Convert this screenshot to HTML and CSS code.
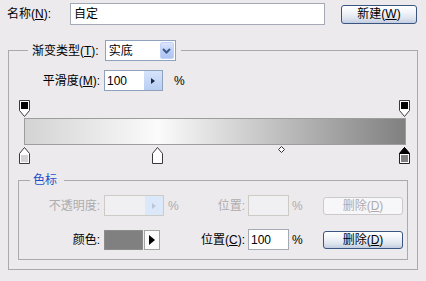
FILE: index.html
```html
<!DOCTYPE html>
<html lang="zh">
<head>
<meta charset="utf-8">
<title>渐变编辑器</title>
<link rel="stylesheet" href="styles.css">
</head>
<body>
<div class="name-row">
  <span class="name-label">名称(<u>N</u>):</span>
  <div class="textbox name-input">自定</div>
  <button class="btn new-btn">新建(<u>W</u>)</button>
</div>

<fieldset class="group outer">
  <legend class="outer-legend">
    <span class="legend-inner">
      <span class="type-label">渐变类型(<u>T</u>):</span>
      <span class="select">
        <span class="select-text">实底</span>
        <span class="select-btn">
          <svg width="9" height="6" viewBox="0 0 9 6"><path d="M1 1 L4.5 4.5 L8 1" fill="none" stroke="#3d5a8c" stroke-width="2"/></svg>
        </span>
      </span>
    </span>
  </legend>

  <div class="row smooth-row">
    <span class="col-label wide">平滑度(<u>M</u>):</span>
    <span class="spinbox">
      <span class="spin-text">100</span>
      <span class="spin-btn"><svg width="4" height="6" viewBox="0 0 4 6"><path d="M0 0 L4 3 L0 6 Z" fill="#1b2a44"/></svg></span>
    </span>
    <span class="pct smooth-pct">%</span>
  </div>

  <div class="ramp">
    <svg class="stop stop-top" style="left:-5px" width="11" height="17" viewBox="0 0 11 17"><path d="M0.5 0.5 H10.5 V10.5 L5.5 16.5 L0.5 10.5 Z" fill="#fff" stroke="#3a3a3a"/><rect x="2" y="2" width="7" height="7" fill="#000"/></svg>
    <svg class="stop stop-top" style="left:375px" width="11" height="17" viewBox="0 0 11 17"><path d="M0.5 0.5 H10.5 V10.5 L5.5 16.5 L0.5 10.5 Z" fill="#fff" stroke="#3a3a3a"/><rect x="2" y="2" width="7" height="7" fill="#000"/></svg>

    <div class="bar"></div>

    <svg class="stop stop-bottom" style="left:-5px" width="11" height="17" viewBox="0 0 11 17"><path d="M5.5 0.5 L10.5 6.5 V16.5 H0.5 V6.5 Z" fill="#fff" stroke="#3a3a3a"/><rect x="2" y="8" width="7" height="7" fill="#d4d4d4"/></svg>
    <svg class="stop stop-bottom" style="left:128px" width="11" height="17" viewBox="0 0 11 17"><path d="M5.5 0.5 L10.5 6.5 V16.5 H0.5 V6.5 Z" fill="#fff" stroke="#3a3a3a"/><rect x="2" y="8" width="7" height="7" fill="#ffffff"/></svg>
    <svg class="stop stop-bottom" style="left:375px" width="11" height="17" viewBox="0 0 11 17"><path d="M5.5 0.5 L10.5 6.5 V16.5 H0.5 V6.5 Z" fill="#fff" stroke="#222"/><path d="M5.5 0.5 L10.5 6.5 H0.5 Z" fill="#000" stroke="#000"/><rect x="2" y="8" width="7" height="7" fill="#808080"/></svg>
    <svg class="midpoint" style="left:254px" width="7" height="7" viewBox="0 0 7 7"><path d="M3.5 0.5 L6.5 3.5 L3.5 6.5 L0.5 3.5 Z" fill="#fff" stroke="#333"/></svg>
  </div>

  <fieldset class="group inner">
    <legend class="inner-legend">色标</legend>

    <div class="row stop-row disabled">
      <span class="col-label">不透明度:</span>
      <span class="control">
        <span class="spinbox off">
          <span class="spin-text"></span>
          <span class="spin-btn"><svg width="4" height="6" viewBox="0 0 4 6"><path d="M0 0 L4 3 L0 6 Z" fill="#b7c6dc"/></svg></span>
        </span>
      </span>
      <span class="pct">%</span>
      <span class="pos-label">位置:</span>
      <span class="textbox pos-input off"></span>
      <span class="pct2">%</span>
      <button class="btn del-btn off">删除(<u>D</u>)</button>
    </div>

    <div class="row stop-row second">
      <span class="col-label">颜色:</span>
      <span class="control">
        <span class="swatch"></span>
        <span class="arrow-btn"><svg width="6" height="10" viewBox="0 0 6 10"><path d="M0 0 L6 5 L0 10 Z" fill="#000"/></svg></span>
      </span>
      <span class="pct"></span>
      <span class="pos-label">位置(<u>C</u>):</span>
      <span class="textbox pos-input">100</span>
      <span class="pct2">%</span>
      <button class="btn del-btn">删除(<u>D</u>)</button>
    </div>
  </fieldset>
</fieldset>
</body>
</html>
```

FILE: styles.css
```css
html, body {
  margin: 0;
  padding: 0;
}

body {
  width: 426px;
  height: 281px;
  overflow: hidden;
  background: #eceaed;
  font-family: "Liberation Sans", "Noto Sans CJK SC", sans-serif;
  font-size: 12px;
  line-height: 16px;
  color: #000;
}

u {
  text-decoration: underline;
  text-underline-offset: 1px;
}

/* ---------- top name row ---------- */
.name-row {
  display: flex;
  align-items: center;
  height: 22px;
  padding: 3px 0 0 7px;
}

.name-label {
  width: 63px;
}

.textbox {
  box-sizing: border-box;
  height: 21px;
  border: 1px solid #a3aab6;
  background: #fff;
  padding: 0 2px;
  display: flex;
  align-items: center;
}

.name-input {
  width: 255px;
  height: 22px;
  padding-left: 3px;
}

.btn {
  box-sizing: border-box;
  border: 1px solid #3a5680;
  border-radius: 3px;
  background: linear-gradient(#ffffff 0%, #f3f5f9 35%, #dde3ee 75%, #c2cde0 100%);
  font: inherit;
  color: #000;
  padding: 0;
  display: flex;
  align-items: center;
  justify-content: center;
}

.new-btn {
  margin-left: 16px;
  width: 76px;
  height: 19px;
}

/* ---------- group boxes ---------- */
.group {
  margin: 0;
  padding: 0;
  min-width: 0;
  border: 1px solid #aaa9ad;
}

.outer {
  box-sizing: border-box;
  width: 410px;
  margin: 15px 0 0 8px;
  padding: 0 0 9px 0;
}

.outer-legend {
  margin-left: 19px;
  padding: 0 5px 0 4px;
}

.legend-inner {
  display: flex;
  align-items: center;
  height: 21px;
}

.type-label {
  margin-right: 6px;
}

.select {
  box-sizing: border-box;
  width: 71px;
  height: 21px;
  border: 1px solid #8fa2bd;
  background: #fff;
  display: flex;
  align-items: stretch;
}

.select-text {
  flex: 1;
  padding-left: 3px;
  display: flex;
  align-items: center;
}

.select-btn {
  width: 14px;
  margin: 1px;
  border-radius: 2px;
  background: linear-gradient(#dbe6fd, #b9cdf7 60%, #aec4f2);
  border: 1px solid #c3d3f7;
  box-sizing: border-box;
  display: flex;
  align-items: center;
  justify-content: center;
}

/* ---------- rows ---------- */
.row {
  display: flex;
  align-items: center;
  height: 21px;
}

.smooth-row {
  margin-top: 9px;
}

.col-label {
  width: 81px;
  margin-right: 4px;
  text-align: right;
}

.col-label.wide {
  width: 91px;
}

.spinbox {
  box-sizing: border-box;
  width: 59px;
  height: 21px;
  border: 1px solid #8fa2bd;
  background: #fff;
  display: flex;
}

.spin-text {
  flex: 1;
  padding-left: 2px;
  display: flex;
  align-items: center;
}

.spin-btn {
  width: 18px;
  background: linear-gradient(#d6e3fb, #b8cdf3);
  display: flex;
  align-items: center;
  justify-content: center;
}

.smooth-pct {
  margin-left: 7px;
}

/* ---------- gradient ramp ---------- */
.ramp {
  position: relative;
  box-sizing: border-box;
  width: 382px;
  height: 68px;
  margin: 7px 0 0 15px;
  padding-top: 20px;
}

.bar {
  box-sizing: border-box;
  height: 27px;
  border: 1px solid #9d9d9d;
  background: linear-gradient(to right, #d3d3d3 0%, #fbfbfb 35%, #808080 100%);
}

.stop {
  position: absolute;
  display: block;
}

.stop-top {
  top: 2px;
}

.stop-bottom {
  top: 49px;
}

.midpoint {
  position: absolute;
  display: block;
  top: 48px;
}

/* ---------- stop group ---------- */
.inner {
  margin: 6px 9px 0 9px;
  padding: 7px 0 9px 0;
}

.inner-legend {
  margin-left: 11px;
  padding: 0 7px 0 3px;
  color: #1f50c9;
}

.stop-row.second {
  margin-top: 13px;
}

.control {
  width: 60px;
  display: flex;
  align-items: center;
}

.control .spinbox {
  width: 60px;
}

.pct {
  box-sizing: border-box;
  width: 16px;
  padding-left: 4px;
}

.pos-label {
  width: 65px;
  margin-right: 3px;
  text-align: right;
}

.pos-input {
  width: 41px;
}

.pct2 {
  box-sizing: border-box;
  width: 34px;
  padding-left: 3px;
}

.del-btn {
  width: 80px;
  height: 18px;
}

.swatch {
  box-sizing: border-box;
  width: 39px;
  height: 20px;
  background: #808080;
  border: 1px solid #8c8c8c;
}

.arrow-btn {
  box-sizing: border-box;
  width: 16px;
  height: 20px;
  margin-left: 1px;
  border: 1px solid #a3a3a3;
  background: #fbfbfb;
  display: flex;
  align-items: center;
  justify-content: center;
}

/* ---------- disabled state ---------- */
.disabled {
  color: #aeacaf;
}

.spinbox.off,
.textbox.off {
  border-color: #cdcbc5;
  background: #f0eff1;
}

.spinbox.off .spin-btn {
  background: #dbe8f9;
}

.btn.off {
  border-color: #cbc9cc;
  background: #f7f6f8;
  color: #aeacaf;
}
```
